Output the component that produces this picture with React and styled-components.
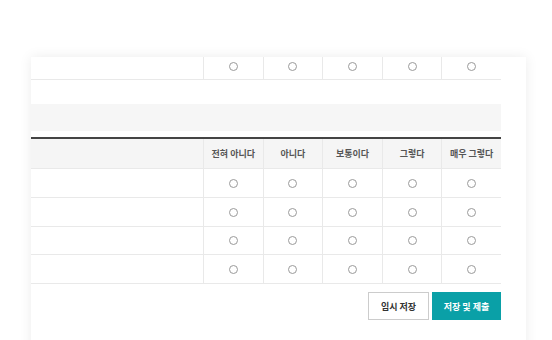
import React from "react";
import styled, { createGlobalStyle } from "styled-components";

const GlobalStyle = createGlobalStyle`
  html, body { margin: 0; padding: 0; background: #ffffff; }
  body { font-family: "Noto Sans CJK KR", "Noto Sans", sans-serif; }
  * { box-sizing: border-box; }
`;

const Page = styled.div`
  padding: 57px 0 0 31px;
  height: 340px;
  overflow: hidden;
`;

const Card = styled.div`
  width: 495px;
  min-height: 300px;
  background: #ffffff;
  padding-right: 25px;
  box-shadow: 0 0 12px rgba(0, 0, 0, 0.08);
`;

const Row = styled.div`
  display: grid;
  grid-template-columns: 172px repeat(5, 1fr);
  height: ${(p) => p.$h || 29}px;
  border-bottom: 1px solid #e9e9e9;
  background: ${(p) => (p.$head ? "#f5f5f5" : "#ffffff")};
  border-top: ${(p) => (p.$head ? "2px solid #444444" : "none")};
`;

const LabelCell = styled.div``;

const OptCell = styled.div`
  border-left: 1px solid #e9e9e9;
  display: flex;
  justify-content: center;
  align-items: ${(p) => (p.$top ? "flex-start" : "center")};
  padding-top: ${(p) => (p.$top ? "5px" : "0")};
  font-size: 9px;
  font-weight: 700;
  color: #555555;
  white-space: nowrap;
`;

const Radio = styled.span`
  width: 9px;
  height: 9px;
  border-radius: 50%;
  border: 1px solid #9a9a9a;
  background: #ffffff;
`;

const Spacer = styled.div`
  height: 24px;
`;

const Band = styled.div`
  height: 27px;
  background: #f6f6f6;
`;

const Gap = styled.div`
  height: 6px;
`;

const Actions = styled.div`
  display: flex;
  justify-content: flex-end;
  gap: 3px;
  padding-top: 8px;
`;

const Button = styled.button`
  height: 28px;
  padding: 0;
  width: ${(p) => (p.$primary ? "69px" : "61px")};
  border: 1px solid ${(p) => (p.$primary ? "#0aa0a7" : "#cccccc")};
  background: ${(p) => (p.$primary ? "#0aa0a7" : "#ffffff")};
  color: ${(p) => (p.$primary ? "#ffffff" : "#333333")};
  font-family: "Noto Sans CJK KR", sans-serif;
  font-size: 9px;
  font-weight: 700;
  cursor: pointer;
`;

const labels = ["전혀 아니다", "아니다", "보통이다", "그렇다", "매우 그렇다"];

function RadioRow({ h, top }) {
  return (
    <Row $h={h}>
      <LabelCell />
      {labels.map((l) => (
        <OptCell key={l} $top={top}>
          <Radio />
        </OptCell>
      ))}
    </Row>
  );
}

export default function App() {
  return (
    <>
      <GlobalStyle />
      <Page>
        <Card>
          <RadioRow h={23} top />
          <Spacer />
          <Band />
          <Gap />
          <Row $head $h={32}>
            <LabelCell />
            {labels.map((l) => (
              <OptCell key={l}>{l}</OptCell>
            ))}
          </Row>
          <RadioRow h={29} />
          <RadioRow h={29} />
          <RadioRow h={28} />
          <RadioRow h={29} />
          <Actions>
            <Button>임시 저장</Button>
            <Button $primary>저장 및 제출</Button>
          </Actions>
        </Card>
      </Page>
    </>
  );
}
